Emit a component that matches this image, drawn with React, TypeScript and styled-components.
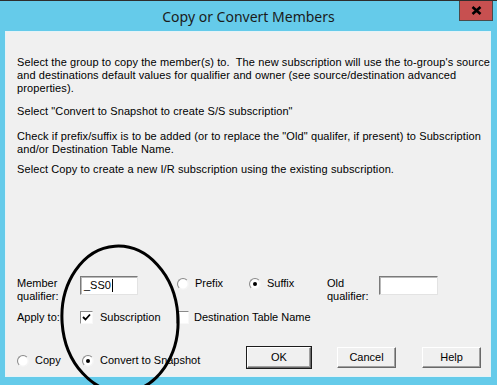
import React from 'react'
import styled, { createGlobalStyle } from 'styled-components'

const GlobalStyle = createGlobalStyle`
  html, body {
    margin: 0;
    padding: 0;
    background: #ffffff;
  }
  body {
    font-family: 'Liberation Sans', Arial, sans-serif;
  }
`

const Window = styled.div`
  position: relative;
  width: 497px;
  height: 385px;
  box-sizing: border-box;
  background: #65cbea;
  border-top: 1px solid #2e2e2e;
  display: flex;
  flex-direction: column;
  overflow: hidden;
`

const TitleBar = styled.div`
  height: 30px;
  display: flex;
  align-items: center;
  justify-content: center;
  font-family: 'Noto Sans', 'Open Sans', sans-serif;
  font-size: 14px;
  color: #1b1b1b;
  padding-top: 1px;
  box-sizing: border-box;
`

const CloseButton = styled.div`
  position: absolute;
  top: -1px;
  left: 459px;
  width: 34px;
  height: 21px;
  box-sizing: border-box;
  background: #c75050;
  border: 1px solid #4a4a4a;
  border-top: none;
  display: flex;
  align-items: center;
  justify-content: center;
`

const Client = styled.div`
  margin: 0 6px 0 5px;
  height: 346px;
  box-sizing: border-box;
  background: #f0f0f0;
  border: 1px solid #e4f3f8;
  padding: 24px 0 0 11px;
  font-size: 11px;
  line-height: 13px;
  color: #000;
  display: flex;
  flex-direction: column;
`

const Para = styled.p<{ $gap: number }>`
  margin: ${({ $gap }) => $gap}px 0 0 0;
  white-space: nowrap;
  letter-spacing: 0.1px;
`

const Form = styled.div`
  margin-top: 101px;
  display: flex;
  flex-direction: column;
`

const Row = styled.div<{ $gap: number }>`
  display: flex;
  align-items: flex-start;
  margin-top: ${({ $gap }) => $gap}px;
`

const Cell = styled.div<{ $w: number; $top?: number }>`
  width: ${({ $w }) => $w}px;
  margin-top: ${({ $top }) => $top ?? 0}px;
  flex: none;
  display: flex;
  align-items: center;
`

const Label = styled.div`
  white-space: nowrap;
`

const TextBox = styled.div<{ $w: number }>`
  width: ${({ $w }) => $w}px;
  height: 19px;
  box-sizing: border-box;
  background: #fff;
  border-style: solid;
  border-width: 1px;
  border-color: #7a7a7a #e3e3e3 #e3e3e3 #7a7a7a;
  box-shadow: inset 1px 1px 0 #b9b9b9;
  display: flex;
  align-items: center;
  padding-left: 3px;
  font-family: 'Liberation Sans', Arial, sans-serif;
  font-size: 11px;
  margin-top: -1px;
`

const Caret = styled.span`
  display: inline-block;
  width: 1px;
  height: 13px;
  background: #000;
  margin-left: 1px;
`

const RadioDot = styled.span<{ $on?: boolean }>`
  width: 12px;
  height: 12px;
  flex: none;
  box-sizing: border-box;
  border-radius: 50%;
  border: 1px solid;
  border-color: #8a8a8a #f4f4f4 #f4f4f4 #8a8a8a;
  background: radial-gradient(circle at 50% 50%, #fff 55%, #e6e6e6 100%);
  display: flex;
  align-items: center;
  justify-content: center;
  margin-right: 6px;
  &::after {
    content: '';
    width: 4px;
    height: 4px;
    border-radius: 50%;
    background: #000;
    display: ${({ $on }) => ($on ? 'block' : 'none')};
  }
`

const CheckBox = styled.span<{ $gap: number }>`
  width: 13px;
  height: 13px;
  flex: none;
  box-sizing: border-box;
  border: 1px solid;
  border-color: #8a8a8a #f8f8f8 #f8f8f8 #8a8a8a;
  background: #fff;
  display: flex;
  align-items: center;
  justify-content: center;
  margin-right: ${({ $gap }) => $gap}px;
`

const Btn = styled.div<{ $w: number; $default?: boolean }>`
  width: ${({ $w }) => $w}px;
  height: 21px;
  margin-right: 26px;
  box-sizing: border-box;
  flex: none;
  background: #f0f0f0;
  border: 1px solid;
  border-color: #fff #696969 #696969 #fff;
  box-shadow: ${({ $default }) =>
    $default ? 'inset -1px -1px 0 #a0a0a0, 0 0 0 1px #1c1c1c' : 'inset -1px -1px 0 #a0a0a0'};
  display: flex;
  align-items: center;
  justify-content: center;
  font-size: 11px;
`

const Overlay = styled.svg`
  position: absolute;
  left: 0;
  top: 0;
  pointer-events: none;
`

function Radio({ on, label, w, top }: { on?: boolean; label: string; w: number; top?: number }) {
  return (
    <Cell $w={w} $top={top}>
      <RadioDot $on={on} />
      <Label>{label}</Label>
    </Cell>
  )
}

export default function App() {
  return (
    <>
      <GlobalStyle />
      <Window>
        <TitleBar>Copy or Convert Members</TitleBar>
        <CloseButton>
          <svg width="11" height="9" viewBox="0 0 11 9">
            <path d="M1.5 1 L9.5 8 M9.5 1 L1.5 8" stroke="#000" strokeWidth="2.6" />
          </svg>
        </CloseButton>
        <Client>
          <Para $gap={0}>
            Select the group to copy the member(s) to.&nbsp; The new subscription will use the to-group's source
            <br />
            and destinations default values for qualifier and owner (see source/destination advanced
            <br />
            properties).
          </Para>
          <Para $gap={10}>Select "Convert to Snapshot to create S/S subscription"</Para>
          <Para $gap={12}>
            Check if prefix/suffix is to be added (or to replace the "Old" qualifer, if present) to Subscription
            <br />
            and/or Destination Table Name.
          </Para>
          <Para $gap={7}>Select Copy to create a new I/R subscription using the existing subscription.</Para>

          <Form>
            <Row $gap={0}>
              <Cell $w={63}>
                <Label>
                  Member
                  <br />
                  qualifier:
                </Label>
              </Cell>
              <Cell $w={97}>
                <TextBox $w={58}>
                  _SS0
                  <Caret />
                </TextBox>
              </Cell>
              <Radio label="Prefix" w={72} />
              <Radio label="Suffix" w={78} on />
              <Cell $w={52}>
                <Label>
                  Old
                  <br />
                  qualifier:
                </Label>
              </Cell>
              <TextBox $w={59} />
            </Row>
            <Row $gap={8}>
              <Cell $w={63}>
                <Label>Apply to:</Label>
              </Cell>
              <Cell $w={96}>
                <CheckBox $gap={7}>
                  <svg width="9" height="9" viewBox="0 0 9 9">
                    <path d="M1 4 L3.5 6.5 L8 1.5" stroke="#000" strokeWidth="1.8" fill="none" />
                  </svg>
                </CheckBox>
                <Label>Subscription</Label>
              </Cell>
              <Cell $w={160}>
                <CheckBox $gap={5} />
                <Label>Destination Table Name</Label>
              </Cell>
            </Row>
            <Row $gap={23}>
              <Radio label="Copy" w={65} top={7} />
              <Radio label="Convert to Snapshot" w={165} top={7} on />
              <Btn $w={64} $default>
                OK
              </Btn>
              <Btn $w={59}>Cancel</Btn>
              <Btn $w={59}>Help</Btn>
            </Row>
          </Form>
        </Client>
        <Overlay width="497" height="385" viewBox="0 0 497 385">
          <ellipse
            cx="120"
            cy="318"
            rx="58"
            ry="73"
            transform="rotate(-4 120 318)"
            fill="none"
            stroke="#000"
            strokeWidth="3"
          />
        </Overlay>
      </Window>
    </>
  )
}
